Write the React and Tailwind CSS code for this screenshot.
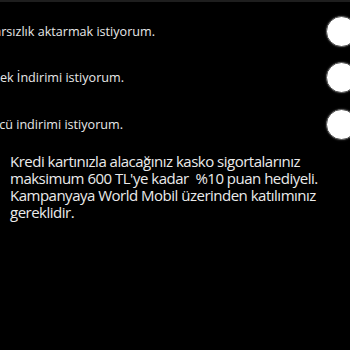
export default function App() {
  const rows = [
    { t: "Borç transferinde karsızlık aktarmak istiyorum.", w: "w-[155px]" },
    { t: "Çek İndirimi istiyorum.", w: "w-[124px]" },
    { t: "Üçüncü indirimi istiyorum.", w: "w-[123px]" },
  ];
  return (
    <div className="w-[350px] h-[350px] bg-black overflow-hidden" style={{ fontFamily: '"Open Sans", "Noto Sans", sans-serif' }}>
      <div className="h-[2px] bg-[#1e1e1e]" />
      <div className="flex flex-col pt-[14px]">
        {rows.map((r, i) => (
          <div key={i} className="flex items-center justify-between h-[30px] mb-[16.5px]">
            <div className={`${r.w} flex justify-end overflow-hidden`}>
              <span className="whitespace-nowrap text-[12.6px] text-[#e8e8e8] shrink-0 mt-[2px]">{r.t}</span>
            </div>
            <div className="w-[31px] h-[31px] rounded-full bg-white border border-[#555] mr-[-7px] shadow-[0_0_2px_rgba(255,255,255,0.3)]" />
          </div>
        ))}
      </div>
      <p className="pl-[10px] pr-[10px] mt-[-2.5px] text-[15px] leading-[17px] tracking-[-0.5px] text-[#ebebeb]">
        Kredi kartınızla alacağınız kasko sigortalarınız maksimum 600 TL'ye kadar&nbsp; %10 puan hediyeli. Kampanyaya World Mobil üzerinden katılımınız gereklidir.
      </p>
    </div>
  );
}
